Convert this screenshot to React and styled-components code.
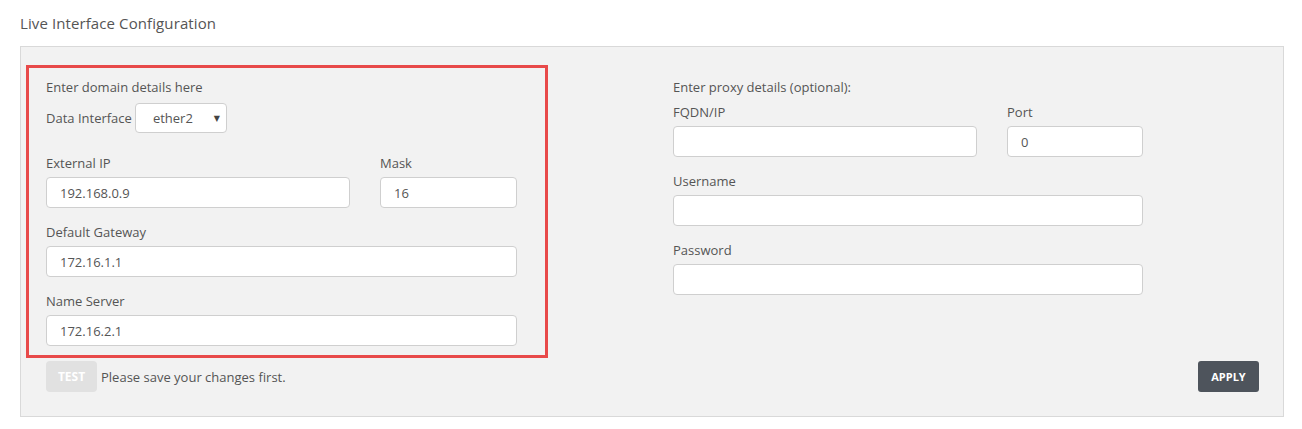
import React from 'react';
import styled, { createGlobalStyle } from 'styled-components';

const GlobalStyle = createGlobalStyle`
  body {
    margin: 0;
    background: #fff;
    font-family: "Open Sans", "DejaVu Sans", sans-serif;
    color: #555;
  }
`;

const App = () => {
  return (
    <Page>
      <GlobalStyle />
      <Title>Live Interface Configuration</Title>
      <Panel>
        <TopRow>
          <DomainBox>
            <Line>Enter domain details here</Line>
            <InterfaceRow>
              <InlineLabel>Data Interface</InlineLabel>
              <SelectWrap>
                <Select defaultValue="ether2">
                  <option value="ether1">ether1</option>
                  <option value="ether2">ether2</option>
                </Select>
                <Caret>▼</Caret>
              </SelectWrap>
            </InterfaceRow>
            <FieldRow $first>
              <Field $width="304px">
                <Label>External IP</Label>
                <Input defaultValue="192.168.0.9" />
              </Field>
              <Field $width="137px">
                <Label>Mask</Label>
                <Input defaultValue="16" />
              </Field>
            </FieldRow>
            <FieldRow>
              <Field>
                <Label>Default Gateway</Label>
                <Input defaultValue="172.16.1.1" />
              </Field>
            </FieldRow>
            <FieldRow>
              <Field>
                <Label>Name Server</Label>
                <Input defaultValue="172.16.2.1" />
              </Field>
            </FieldRow>
          </DomainBox>

          <ProxyColumn>
            <Line>Enter proxy details (optional):</Line>
            <FieldRow $tight>
              <Field $width="304px">
                <Label>FQDN/IP</Label>
                <Input />
              </Field>
              <Field $width="136px">
                <Label>Port</Label>
                <Input defaultValue="0" />
              </Field>
            </FieldRow>
            <FieldRow>
              <Field>
                <Label>Username</Label>
                <Input />
              </Field>
            </FieldRow>
            <FieldRow>
              <Field>
                <Label>Password</Label>
                <Input type="password" />
              </Field>
            </FieldRow>
          </ProxyColumn>
        </TopRow>

        <BottomRow>
          <TestGroup>
            <TestButton disabled>TEST</TestButton>
            <Hint>Please save your changes first.</Hint>
          </TestGroup>
          <ApplyButton>APPLY</ApplyButton>
        </BottomRow>
      </Panel>
    </Page>
  );
};

export default App;

const Page = styled.div`
  padding: 13px 0 0 20px;
`;

const Title = styled.h1`
  margin: 0 0 13px;
  font-size: 15px;
  line-height: 20px;
  font-weight: 400;
  letter-spacing: 0.1px;
  color: #555;
`;

const Panel = styled.div`
  box-sizing: border-box;
  width: 1264px;
  padding: 18px 24px 24px 5px;
  background: #f2f2f2;
  border: 1px solid #d9d9d9;
`;

const TopRow = styled.div`
  display: flex;
  align-items: flex-start;
  gap: 125px;
`;

const DomainBox = styled.div`
  box-sizing: border-box;
  width: 522px;
  padding: 10px 28px 9px 17px;
  border: 3px solid #e84a4a;
`;

const ProxyColumn = styled.div`
  width: 470px;
  padding-top: 13px;
`;

const Line = styled.div`
  font-size: 13px;
  line-height: 18px;
`;

const InterfaceRow = styled.div`
  display: flex;
  align-items: center;
  gap: 3px;
  margin-top: 7px;
`;

const InlineLabel = styled.span`
  font-size: 13px;
  line-height: 18px;
`;

const SelectWrap = styled.div`
  position: relative;
  width: 92px;
`;

const Select = styled.select`
  appearance: none;
  box-sizing: border-box;
  width: 100%;
  height: 30px;
  padding: 0 0 0 17px;
  background: #fff;
  border: 1px solid #cfcfcf;
  border-radius: 4px;
  font-family: "Open Sans", sans-serif;
  font-size: 13px;
  color: #555;
`;

const Caret = styled.span`
  position: absolute;
  right: 7px;
  top: 9px;
  font-size: 8px;
  color: #444;
  pointer-events: none;
`;

const FieldRow = styled.div`
  display: flex;
  justify-content: space-between;
  margin-top: ${({ $first, $tight }) => ($first ? '21px' : $tight ? '7px' : '15px')};
`;

const Field = styled.div`
  display: flex;
  flex-direction: column;
  gap: 5px;
  width: ${({ $width }) => $width || '100%'};
`;

const Label = styled.label`
  font-size: 13px;
  line-height: 18px;
`;

const Input = styled.input`
  box-sizing: border-box;
  width: 100%;
  height: 31px;
  padding: 0 13px;
  background: #fff;
  border: 1px solid #cfcfcf;
  border-radius: 4px;
  font-family: "Open Sans", sans-serif;
  font-size: 13px;
  color: #555;
  outline: none;
`;

const BottomRow = styled.div`
  display: flex;
  justify-content: space-between;
  align-items: center;
  margin-top: 3px;
  padding-left: 20px;
`;

const TestGroup = styled.div`
  display: flex;
  align-items: center;
  gap: 4px;
`;

const TestButton = styled.button`
  width: 51px;
  height: 31px;
  padding: 0;
  background: #e1e1e1;
  border: none;
  border-radius: 4px;
  color: #fff;
  font-family: "Open Sans", sans-serif;
  font-size: 12px;
  font-weight: 700;
`;

const Hint = styled.span`
  font-size: 13px;
  line-height: 18px;
`;

const ApplyButton = styled.button`
  width: 61px;
  height: 31px;
  padding: 0;
  background: #4e545c;
  border: none;
  border-radius: 3px;
  color: #fff;
  font-family: "Open Sans", sans-serif;
  font-size: 11px;
  font-weight: 700;
  cursor: pointer;
`;
